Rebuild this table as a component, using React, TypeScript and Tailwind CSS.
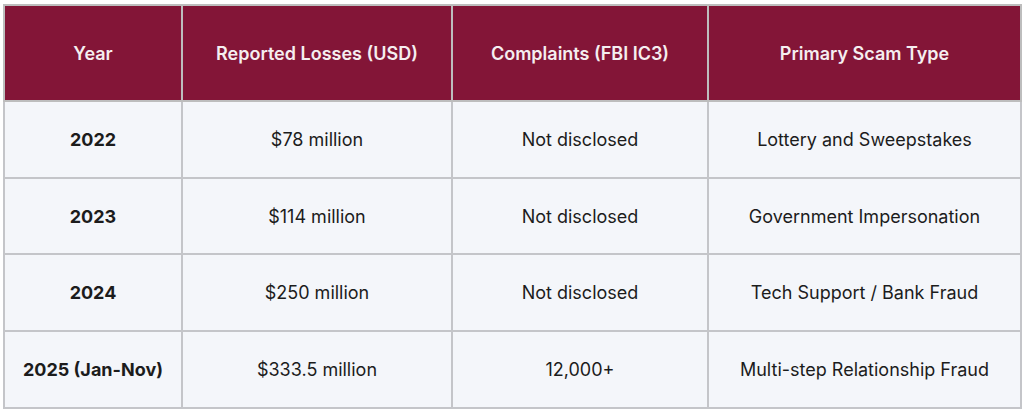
const rows = [
  ['2022', '$78 million', 'Not disclosed', 'Lottery and Sweepstakes'],
  ['2023', '$114 million', 'Not disclosed', 'Government Impersonation'],
  ['2024', '$250 million', 'Not disclosed', 'Tech Support / Bank Fraud'],
  ['2025 (Jan-Nov)', '$333.5 million', '12,000+', 'Multi-step Relationship Fraud'],
];

const headers = ['Year', 'Reported Losses (USD)', 'Complaints (FBI IC3)', 'Primary Scam Type'];
const widths = ['w-[178px]', 'w-[270px]', 'w-[256px]', 'w-[313px]'];

export default function App() {
  return (
    <div className="w-[1024px] h-[411px] bg-white pl-[3px] pt-[4px] font-['Inter',sans-serif]">
      <table className="border-collapse table-fixed w-[1018px] bg-[#f4f6fa]">
        <thead>
          <tr className="h-[96px] bg-[#831537]">
            {headers.map((h, i) => (
              <th
                key={h}
                className={`${widths[i]} border-2 border-[#bdbdbd] text-center text-[18px] font-semibold text-[#f5eef0]`}
              >
                {h}
              </th>
            ))}
          </tr>
        </thead>
        <tbody>
          {rows.map((r) => (
            <tr key={r[0]} className="h-[76.7px]">
              {r.map((c, i) => (
                <td
                  key={i}
                  className={`border-2 border-[#c4c5c9] text-center text-[18px] text-[#1c1c1c] ${i === 0 ? 'font-bold' : 'font-normal'}`}
                >
                  {c}
                </td>
              ))}
            </tr>
          ))}
        </tbody>
      </table>
    </div>
  );
}
